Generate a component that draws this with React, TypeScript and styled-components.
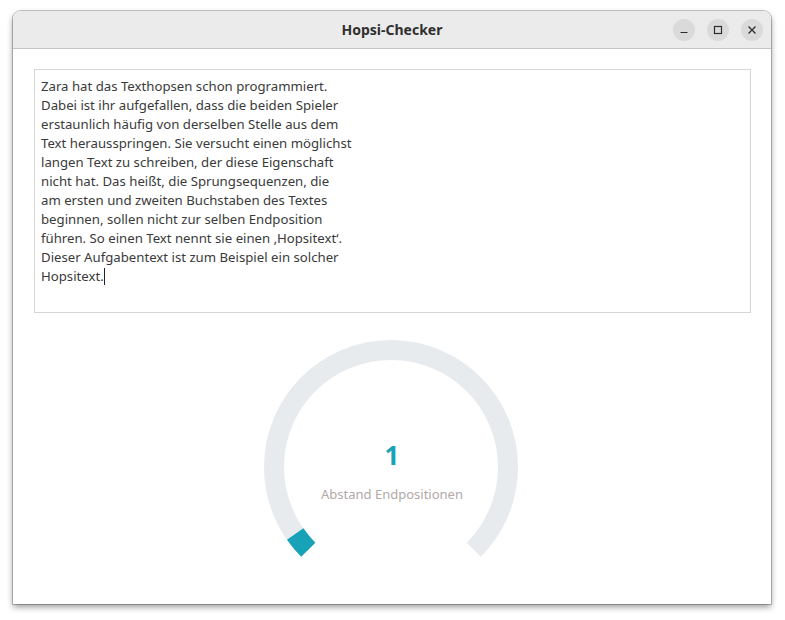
import React from "react";
import styled, { createGlobalStyle } from "styled-components";

const Global = createGlobalStyle`
  html, body { margin: 0; padding: 0; background: #ffffff; }
  body { font-family: "Noto Sans", "DejaVu Sans", sans-serif; }
`;

const Page = styled.div`
  padding: 11px 0 0 13px;
  width: 785px;
  height: 620px;
  box-sizing: border-box;
`;

const Window = styled.div`
  width: 758px;
  height: 593px;
  border-radius: 8px 8px 0 0;
  background: #ffffff;
  box-shadow: 0 0 0 1px rgba(0, 0, 0, 0.22), 0 3px 6px rgba(0, 0, 0, 0.4);
  display: flex;
  flex-direction: column;
  overflow: hidden;
`;

const TitleBar = styled.div`
  height: 37px;
  flex: 0 0 37px;
  background: #ebebeb;
  border-bottom: 1px solid #c4c4c4;
  display: grid;
  grid-template-columns: 1fr auto 1fr;
  align-items: center;
`;

const Title = styled.div`
  grid-column: 2;
  font-size: 14px;
  font-weight: 700;
  color: #303030;
`;

const Controls = styled.div`
  grid-column: 3;
  justify-self: end;
  display: flex;
  gap: 12px;
  padding-right: 8px;
`;

const CtrlButton = styled.div`
  width: 22px;
  height: 22px;
  border-radius: 50%;
  background: #dadada;
  display: flex;
  align-items: center;
  justify-content: center;
  color: #2e2e2e;
`;

const Content = styled.div`
  flex: 1;
  padding: 20px 20px 0 21px;
  display: flex;
  flex-direction: column;
  align-items: center;
`;

const TextBox = styled.div`
  align-self: stretch;
  height: 244px;
  box-sizing: border-box;
  border: 1px solid #d6d6d6;
  padding: 7px 6px;
  font-size: 13.2px;
  line-height: 19px;
  color: #3a3a3a;
  white-space: pre-wrap;
`;

const Caret = styled.span`
  display: inline-block;
  width: 1px;
  height: 17px;
  background: #222;
  vertical-align: -4px;
`;

const Gauge = styled.div`
  position: relative;
  width: 260px;
  height: 230px;
  margin: 24px 4px 0 0;
`;

const GaugeText = styled.div`
  position: absolute;
  left: 3px;
  right: 0;
  top: 100px;
  display: flex;
  flex-direction: column;
  align-items: center;
`;

const Value = styled.div`
  font-size: 26px;
  font-weight: 700;
  color: #1aa3b8;
  line-height: 36px;
`;

const Label = styled.div`
  margin-top: 12px;
  font-size: 13px;
  color: #b1a9a7;
`;

const text = `Zara hat das Texthopsen schon programmiert.
Dabei ist ihr aufgefallen, dass die beiden Spieler
erstaunlich häufig von derselben Stelle aus dem
Text herausspringen. Sie versucht einen möglichst
langen Text zu schreiben, der diese Eigenschaft
nicht hat. Das heißt, die Sprungsequenzen, die
am ersten und zweiten Buchstaben des Textes
beginnen, sollen nicht zur selben Endposition
führen. So einen Text nennt sie einen ‚Hopsitext‘.
Dieser Aufgabentext ist zum Beispiel ein solcher
Hopsitext.`;

function polar(cx: number, cy: number, r: number, deg: number) {
  const a = (deg * Math.PI) / 180;
  return [cx + r * Math.cos(a), cy + r * Math.sin(a)];
}

function arc(cx: number, cy: number, r: number, from: number, to: number) {
  const [x1, y1] = polar(cx, cy, r, from);
  const [x2, y2] = polar(cx, cy, r, to);
  const large = to - from > 180 ? 1 : 0;
  return `M ${x1} ${y1} A ${r} ${r} 0 ${large} 1 ${x2} ${y2}`;
}

export default function App() {
  const cx = 130;
  const cy = 130;
  const r = 117;
  return (
    <>
      <Global />
      <Page>
        <Window>
          <TitleBar>
            <Title>Hopsi-Checker</Title>
            <Controls>
              <CtrlButton>
                <svg width="10" height="10" viewBox="0 0 10 10">
                  <path d="M1.5 7.5 H8.5" stroke="currentColor" strokeWidth="1.2" />
                </svg>
              </CtrlButton>
              <CtrlButton>
                <svg width="10" height="10" viewBox="0 0 10 10">
                  <rect x="1.5" y="1.5" width="7" height="7" fill="none" stroke="currentColor" strokeWidth="1.2" />
                </svg>
              </CtrlButton>
              <CtrlButton>
                <svg width="10" height="10" viewBox="0 0 10 10">
                  <path d="M1.5 1.5 L8.5 8.5 M8.5 1.5 L1.5 8.5" stroke="currentColor" strokeWidth="1.3" />
                </svg>
              </CtrlButton>
            </Controls>
          </TitleBar>
          <Content>
            <TextBox>
              {text}
              <Caret />
            </TextBox>
            <Gauge>
              <svg width="260" height="230" viewBox="0 0 260 230">
                <path d={arc(cx, cy, r, 135, 405)} fill="none" stroke="#e8ebee" strokeWidth="20" />
                <path d={arc(cx, cy, r, 135, 145)} fill="none" stroke="#17a2b8" strokeWidth="20" />
              </svg>
              <GaugeText>
                <Value>1</Value>
                <Label>Abstand Endpositionen</Label>
              </GaugeText>
            </Gauge>
          </Content>
        </Window>
      </Page>
    </>
  );
}
